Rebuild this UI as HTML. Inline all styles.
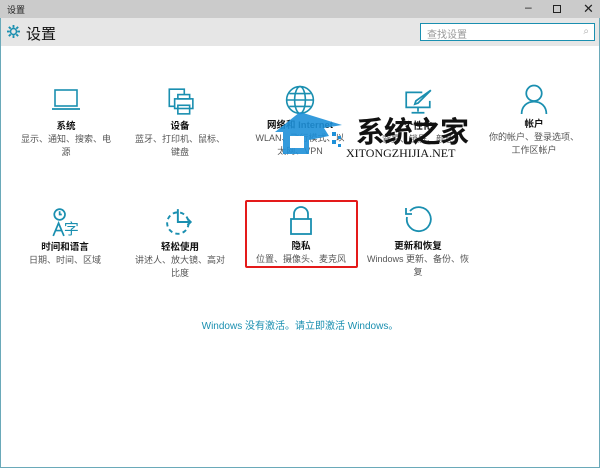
<!DOCTYPE html>
<html><head><meta charset="utf-8"><style>
*{margin:0;padding:0;box-sizing:border-box}
body{width:600px;height:468px;overflow:hidden;background:#fff;font-family:"Liberation Sans","Noto Sans CJK SC",sans-serif;position:relative}
.frame{position:absolute;left:0;top:0;width:600px;height:468px;border:1px solid #6aa9b9;border-top:none}
.tb{position:absolute;left:0;top:0;width:600px;height:18px;background:#cbcbcb;font-size:9px;color:#222}
.hd{position:absolute;left:1px;top:18px;width:598px;height:28px;background:#e6e6e6}
.it{position:absolute;width:110px;text-align:center}
.it svg{display:block;margin:0 auto}
.t{font-size:9.5px;color:#111;margin-top:8px;line-height:13px;font-weight:bold}
.d{font-size:9px;color:#555;line-height:13px;padding:0 9px}
</style></head><body>
<div class="frame"></div>
<div class="tb"><span style="position:absolute;left:7px;top:3px">设置</span>
<span style="position:absolute;left:525px;top:0;font-size:12px">–</span>
<div style="position:absolute;left:553px;top:5px;width:8px;height:8px;border:1px solid #222"></div>
<span style="position:absolute;left:583px;top:1px;font-size:13px">✕</span></div>
<div class="hd">
<svg style="position:absolute;left:6px;top:7px" width="13" height="13" viewBox="0 0 14 14"><circle cx="7" cy="7" r="3.2" fill="none" stroke="#1a8fb0" stroke-width="1.6"/><g stroke="#1a8fb0" stroke-width="2"><line x1="7" y1="0" x2="7" y2="3"/><line x1="7" y1="11" x2="7" y2="14"/><line x1="0" y1="7" x2="3" y2="7"/><line x1="11" y1="7" x2="14" y2="7"/><line x1="2" y1="2" x2="4" y2="4"/><line x1="10" y1="10" x2="12" y2="12"/><line x1="2" y1="12" x2="4" y2="10"/><line x1="10" y1="4" x2="12" y2="2"/></g></svg>
<span style="position:absolute;left:25px;top:5px;font-size:15px;color:#111">设置</span>
<div style="position:absolute;left:419px;top:5px;width:175px;height:18px;background:#fff;border:1px solid #1a8fb0;font-size:10px;color:#999;padding:2px 6px">查找设置<span style="position:absolute;right:5px;top:2px;color:#aaa">⌕</span></div>
</div>

<div class="it" style="left:11px;top:88px"><svg width="30" height="24" viewBox="0 0 30 24"><rect x="4" y="2" width="22" height="16" fill="none" stroke="#1a8fb0" stroke-width="1.6"/><path d="M1 21h28" stroke="#1a8fb0" stroke-width="1.8"/></svg><div class="t" style="margin-top:8px">系统</div><div class="d">显示、通知、搜索、电源</div></div>
<div class="it" style="left:125px;top:86px"><svg width="30" height="30" viewBox="0 0 28 28"><path d="M4 14V3h14v5M4 14v5h5" fill="none" stroke="#1a8fb0" stroke-width="1.5"/><rect x="9" y="12" width="17" height="9" fill="none" stroke="#1a8fb0" stroke-width="1.5"/><rect x="12" y="8" width="11" height="4" fill="none" stroke="#1a8fb0" stroke-width="1.5"/><rect x="12" y="18" width="11" height="8" fill="none" stroke="#1a8fb0" stroke-width="1.5"/></svg><div class="t" style="margin-top:4px">设备</div><div class="d">蓝牙、打印机、鼠标、键盘</div></div>
<div class="it" style="left:245px;top:85px"><svg width="30" height="30" viewBox="0 0 28 28"><g fill="none" stroke="#1a8fb0" stroke-width="1.5"><circle cx="14" cy="14" r="12.5"/><ellipse cx="14" cy="14" rx="5" ry="12.5"/><path d="M1.5 14h25M4 8h20M4 20h20"/></g></svg><div class="t" style="margin-top:4px">网络和 Internet</div><div class="d">WLAN、飞行模式、以太网、VPN</div></div>
<div class="it" style="left:363px;top:88px"><svg width="30" height="28" viewBox="0 0 28 26"><g fill="none" stroke="#1a8fb0" stroke-width="1.6"><path d="M18 4H3v14h22v-6"/><path d="M14 18v4M8 23h12"/><path d="M26 2l-12 12-3 1 1-3z"/></g></svg><div class="t" style="margin-top:4px">个性化</div><div class="d">背景、锁屏、颜色</div></div>
<div class="it" style="left:479px;top:84px"><svg width="30" height="31" viewBox="0 0 28 30"><g fill="none" stroke="#1a8fb0" stroke-width="1.7"><circle cx="14" cy="9" r="7.5"/><path d="M2 29c0-7 5-12 12-12s12 5 12 12"/></g></svg><div class="t" style="margin-top:3px">帐户</div><div class="d">你的帐户、登录选项、工作区帐户</div></div>

<div class="it" style="left:10px;top:207px"><svg width="30" height="30" viewBox="0 0 28 28"><g fill="none" stroke="#1a8fb0" stroke-width="1.6"><circle cx="9" cy="7" r="5"/><path d="M9 4v3h2M3 27l5-12 5 12M5 22h6"/></g><text x="13" y="25" font-size="14" fill="#1a8fb0" font-family="Noto Sans CJK SC">字</text></svg><div class="t" style="margin-top:4px">时间和语言</div><div class="d">日期、时间、区域</div></div>
<div class="it" style="left:125px;top:207px"><svg width="30" height="30" viewBox="0 0 28 28"><g fill="none" stroke="#1a8fb0" stroke-width="1.8"><circle cx="12" cy="15" r="10" stroke-dasharray="4 3"/><path d="M12 2v12h12M21 11l3 3-3 3"/></g></svg><div class="t" style="margin-top:4px">轻松使用</div><div class="d">讲述人、放大镜、高对比度</div></div>
<div class="it" style="left:246px;top:206px"><svg width="26" height="30" viewBox="0 0 26 30"><g fill="none" stroke="#1a8fb0" stroke-width="1.8"><path d="M6 13V8a7 7 0 0 1 14 0v5"/><rect x="3" y="13" width="20" height="15"/></g></svg><div class="t" style="margin-top:4px">隐私</div><div class="d">位置、摄像头、麦克风</div></div>
<div class="it" style="left:358px;top:205px;width:120px"><svg width="30" height="30" viewBox="0 0 30 30"><g fill="none" stroke="#1a8fb0" stroke-width="1.8"><path d="M7 6a12 12 0 1 1-3 6"/><path d="M3 3v6h6"/></g></svg><div class="t" style="margin-top:5px">更新和恢复</div><div class="d">Windows 更新、备份、恢复</div></div>

<div style="position:absolute;left:245px;top:200px;width:113px;height:68px;border:2px solid #e41a1a;border-radius:2px"></div>

<div style="position:absolute;left:0;width:600px;top:317px;text-align:center;font-size:10px;color:#1a8fb0">Windows 没有激活。请立即激活 Windows。</div>

<svg style="position:absolute;left:270px;top:110px" width="75" height="50" viewBox="0 0 75 50"><path d="M30 2L5 22h8v22h26V30l20-4-5-8 18-3z" fill="#1e90d8" opacity=".9"/><path d="M20 26h14v12H20z" fill="#fff"/><g fill="#1e90d8"><rect x="62" y="22" width="4" height="4"/><rect x="68" y="26" width="3" height="3"/><rect x="62" y="30" width="4" height="4"/><rect x="68" y="34" width="3" height="3"/></g></svg>
<div style="position:absolute;left:356px;top:113px;font-size:29px;font-weight:bold;color:#111;font-family:'Noto Sans CJK SC',sans-serif;line-height:34px;letter-spacing:-1px">系统之家</div>
<div style="position:absolute;left:346px;top:146px;font-size:12px;color:#111;font-family:'Liberation Serif',serif">XITONGZHIJIA.NET</div>
</body></html>
